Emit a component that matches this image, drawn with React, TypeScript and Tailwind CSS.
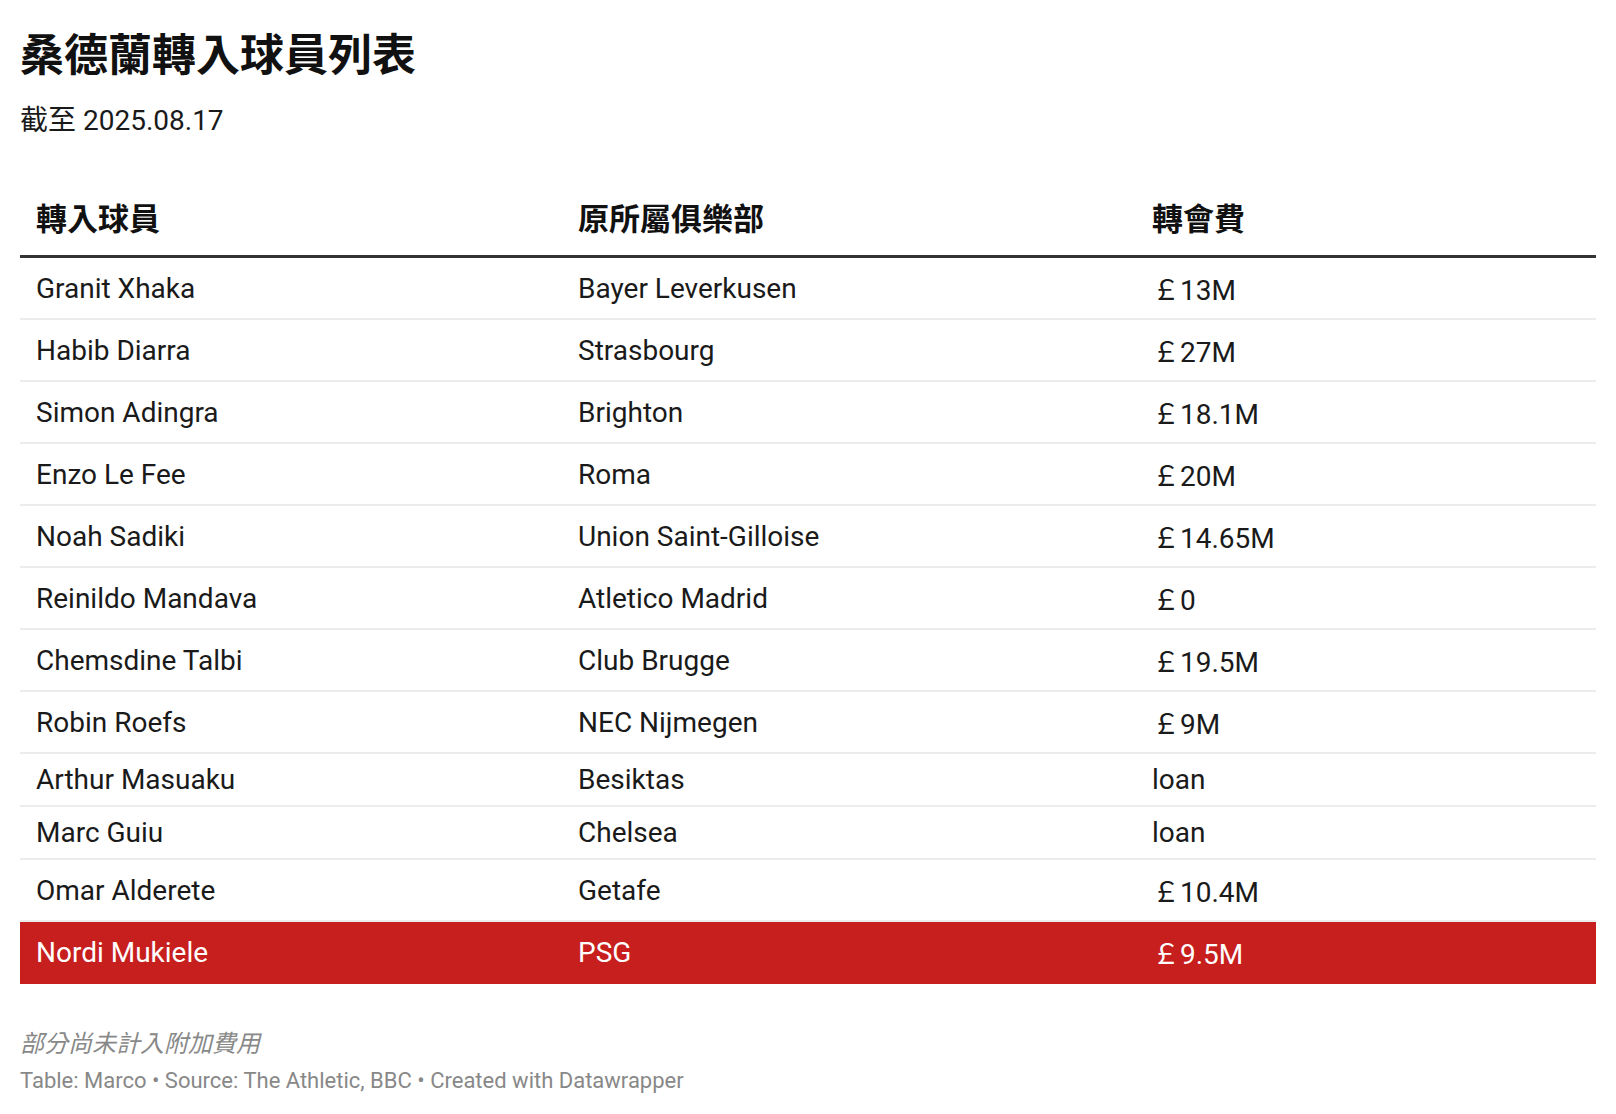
const rows = [
  { name: "Granit Xhaka", club: "Bayer Leverkusen", fee: "￡13M" },
  { name: "Habib Diarra", club: "Strasbourg", fee: "￡27M" },
  { name: "Simon Adingra", club: "Brighton", fee: "￡18.1M" },
  { name: "Enzo Le Fee", club: "Roma", fee: "￡20M" },
  { name: "Noah Sadiki", club: "Union Saint-Gilloise", fee: "￡14.65M" },
  { name: "Reinildo Mandava", club: "Atletico Madrid", fee: "￡0" },
  { name: "Chemsdine Talbi", club: "Club Brugge", fee: "￡19.5M" },
  { name: "Robin Roefs", club: "NEC Nijmegen", fee: "￡9M" },
  { name: "Arthur Masuaku", club: "Besiktas", fee: "loan" },
  { name: "Marc Guiu", club: "Chelsea", fee: "loan" },
  { name: "Omar Alderete", club: "Getafe", fee: "￡10.4M" },
  { name: "Nordi Mukiele", club: "PSG", fee: "￡9.5M", highlight: true },
];

export default function App() {
  return (
    <div className="min-h-screen bg-white px-5 pt-5 font-[Roboto,'Noto_Sans_CJK_TC',sans-serif] leading-[normal] text-[#1a1a1a]">
      <h1 className="text-[44px] font-bold leading-[normal] text-[#111]">桑德蘭轉入球員列表</h1>
      <p className="mt-[14px] text-[28px]">截至 2025.08.17</p>

      <table className="mt-[46px] w-full table-fixed border-collapse">
        <colgroup>
          <col className="w-[542px]" />
          <col className="w-[574px]" />
          <col />
        </colgroup>
        <thead>
          <tr className="border-b-[3px] border-[#333]">
            <th className="px-4 pt-[10px] pb-[16px] text-left text-[31px] font-bold text-[#111]">轉入球員</th>
            <th className="px-4 pt-[10px] pb-[16px] text-left text-[31px] font-bold text-[#111]">原所屬俱樂部</th>
            <th className="px-4 pt-[10px] pb-[16px] text-left text-[31px] font-bold text-[#111]">轉會費</th>
          </tr>
        </thead>
        <tbody className="text-[28px]">
          {rows.map((r) => {
            // loan rows have no fallback glyph, so the line box is shorter
            const pad = r.fee === "loan" ? "px-4 py-[9px]" : "px-4 py-[10px]";
            return (
              <tr
                key={r.name}
                className={r.highlight ? "border-b-2 border-[#c71e1e] bg-[#c71e1e] text-white" : "border-b-2 border-[#ececec]"}
              >
                <td className={pad}>{r.name}</td>
                <td className={pad}>{r.club}</td>
                <td className={pad}>{r.fee}</td>
              </tr>
            );
          })}
        </tbody>
      </table>

      <div className="mt-[40px] text-[#888]">
        <p className="text-[24px] italic">部分尚未計入附加費用</p>
        <p className="mt-[9px] text-[22px]">Table: Marco • Source: The Athletic, BBC • Created with Datawrapper</p>
      </div>
    </div>
  );
}
